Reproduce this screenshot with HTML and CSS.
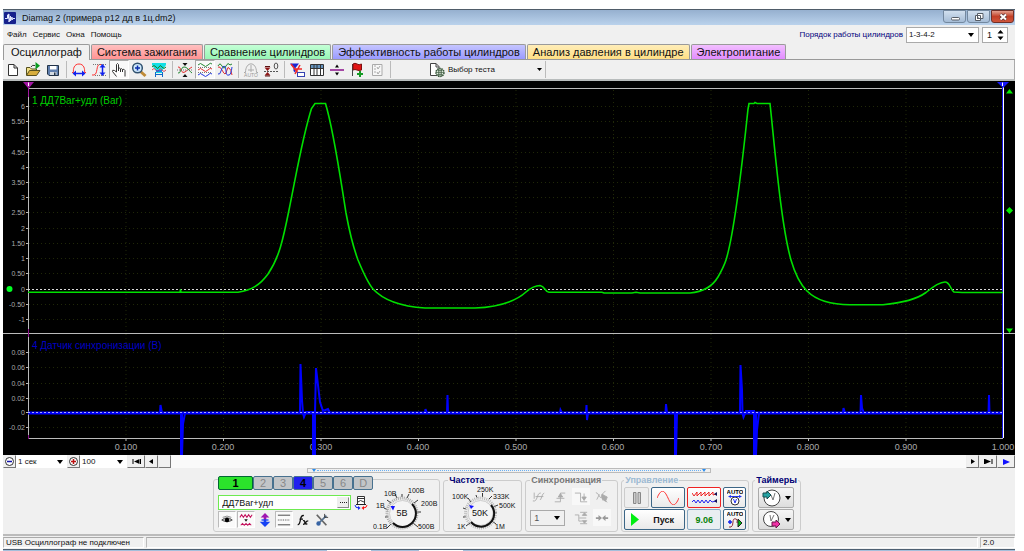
FILE: index.html
```html
<!DOCTYPE html>
<html lang="ru">
<head>
<meta charset="utf-8">
<title>Diamag 2</title>
<link rel="stylesheet" href="styles.css">
</head>
<body>
<div class="window">
  <header class="titlebar">
    <svg class="app-icon" viewBox="0 0 12 12"><rect width="12" height="12" rx="1" fill="#16218c"/><path d="M1 6.500H3.500V3L5 2V10L6.500 4V9L8 5V8L9 6.500H11" fill="#fff" stroke="#dfe6ff"/></svg>
    <h1 class="title">Diamag 2 (примера р12 дд в 1ц.dm2)</h1>
    <div class="window-buttons">
      <button class="win-btn" aria-label="Свернуть"><svg width="22" height="12" viewBox="0 0 22 12"><rect x="7.500" y="6.500" width="8" height="2.500" rx="1" fill="#fff" stroke="#565d66"/></svg></button>
      <button class="win-btn" aria-label="Развернуть"><svg width="22" height="12" viewBox="0 0 22 12"><path d="M9.500 2.500H15V7.500H9.500ZM7.500 4.500H12.500V9.500H7.500Z" fill="#fff" stroke="#565d66"/><path d="M9 6.500h2v1.500H9z" fill="#565d66"/></svg></button>
      <button class="win-btn win-close" aria-label="Закрыть"><svg width="22" height="12" viewBox="0 0 22 12"><path d="M8.500 3.500L14 8.500M14 3.500L8.500 8.500" stroke="#553338" stroke-width="3.500"/><path d="M8.500 3.500L14 8.500M14 3.500L8.500 8.500" stroke="#fff" stroke-width="2"/></svg></button>
    </div>
  </header>

  <div class="menubar">
    <nav class="menu"><button>Файл</button><button>Сервис</button><button>Окна</button><button>Помощь</button></nav>
    <div class="order">
      <label class="order-label" for="order">Порядок работы цилиндров</label>
      <select id="order" class="field order-select"><option>1-3-4-2</option></select>
      <span class="field spinner"><input id="cyl" type="number" value="1" aria-label="Номер цилиндра"><svg width="7" height="10" viewBox="0 0 7 10"><path d="M0.500 3.500L3.500 0L6.500 3.500ZM0.500 6.500H6.500L3.500 10Z"/></svg></span>
    </div>
  </div>

  <nav class="tabs" role="tablist">
    <button role="tab" class="tab active" aria-selected="true">Осциллограф</button>
    <button role="tab" class="tab red">Система зажигания</button>
    <button role="tab" class="tab green">Сравнение цилиндров</button>
    <button role="tab" class="tab blue">Эффективность работы цилиндров</button>
    <button role="tab" class="tab yellow">Анализ давления в цилиндре</button>
    <button role="tab" class="tab violet">Электропитание</button>
  </nav>

  <div class="toolbar">
    <button class="tool" aria-label="Новый"><svg viewBox="0 0 16 16"><path d="M3.500 2.500H9L12.500 6V13.500H3.500ZM9 2.500V6H12.500" fill="#fff" stroke="#333"/></svg></button>
    <button class="tool" aria-label="Открыть"><svg viewBox="0 0 16 16"><path d="M1.500 13V5.500H5L6.500 7H11.500V9" fill="#f2e28a" stroke="#57501f"/><path d="M1.500 13.500L4.500 8.500H15L11.500 13.500Z" fill="#d7ad3d" stroke="#57501f"/><path d="M6 5Q7 2.500 10 3.500" fill="none" stroke="#333"/><path d="M10.500 0L15 3.800L10.500 7.500Z" fill="#079b20"/></svg></button>
    <button class="tool" aria-label="Сохранить"><svg viewBox="0 0 16 16"><path d="M2.500 3.500H13.500V13.500H4L2.500 12Z" fill="#607fae" stroke="#233449"/><path d="M5 4H11.500V7.500H5Z" fill="#fff"/><path d="M5 10H11.500V13H5Z" fill="#d5dbe2"/><path d="M9 10.500h1.500V13H9z" fill="#233449"/></svg></button>
    <span class="sep"></span>
    <button class="tool" aria-label="Период"><svg viewBox="0 0 16 16"><path d="M1 10.500H2.500C2 7 3 2 8 2S14 7 13.500 10.500H15" fill="none" stroke="#f33"/><path d="M3 11.500H13" stroke="#12e" stroke-width="1.500"/><path d="M1.500 11.500L5 8.500V14.500ZM14.500 11.500L11 8.500V14.500Z" fill="#12e"/></svg></button>
    <button class="tool" aria-label="Амплитуда"><svg viewBox="0 0 16 16"><path d="M1 13H3C7 12 5 3 8.500 2.500H10" fill="none" stroke="#f33"/><path d="M2 2.500H15M4 13.500H15" stroke="#777" stroke-dasharray="1 1"/><path d="M11.500 4V12" stroke="#12e" stroke-width="1.500"/><path d="M11.500 2L14.500 5.500H8.500ZM11.500 14L8.500 10.500H14.500Z" fill="#12e"/></svg></button>
    <button class="tool pressed" aria-label="Рука"><svg viewBox="0 0 16 16"><path d="M5.500 14.500L1.500 9.500Q1 7.500 3.500 8.500L5.500 10V2.500Q6.500 .5 7.500 2.500V6.500Q8.500 5.500 9.500 7Q10.500 6 11.500 7.500Q13 6.500 14 8.500V14.500M7.500 6V9M9.500 7V10M11.500 7.500V10" fill="#fff" stroke="#333"/></svg></button>
    <button class="tool" aria-label="Лупа"><svg viewBox="0 0 16 16"><path d="M9 9L14.500 14" stroke="#bf8a36" stroke-width="3"/><circle cx="6.500" cy="6" r="4.800" fill="#cfe9fb" stroke="#31516f" stroke-width="1.500"/><path d="M4 6H9M6.500 3.500V8.500" stroke="#0a2dac" stroke-width="1.500"/></svg></button>
    <button class="tool" aria-label="Диапазон"><svg viewBox="0 0 16 16"><path d="M1 1H15V3L11 9V11H5V9L1 3Z" fill="#13dfe5"/><path d="M1 5Q3 2 5 5T8 5T11 5T15 5" fill="none" stroke="#187b28"/><path d="M1 8Q3 5 5 8T8 8T11 8T15 8" fill="none" stroke="#d05060"/><path d="M5 9H11" stroke="#2227dd"/><path d="M4.500 10V15M11.500 10V15M5 12.500H11" stroke="#1269c7"/></svg></button>
    <span class="sep"></span>
    <button class="tool" aria-label="Совместить"><svg viewBox="0 0 16 16"><path d="M1 5Q2.500 4 4 8T8 10T12 7T15 5" fill="none" stroke="#e32f2f"/><path d="M1 11Q2.500 12 4 8T8 5T12 8T15 11" fill="none" stroke="#238732"/><path d="M0 8H16" stroke="#777" stroke-dasharray="1 1"/><path d="M8 4L5.500 1H10.500ZM8 12L5.500 15H10.500Z" fill="#111"/></svg></button>
    <button class="tool pressed" aria-label="Каналы"><svg viewBox="0 0 16 16" fill="none"><path d="M1 3Q3.500 0 6 3T11 3T15 2" stroke="#238732"/><path d="M1 8Q3.500 5 6 8T11 8T15 7" stroke="#e32f2f"/><path d="M1 13Q3.500 10 6 13T11 13T15 12" stroke="#2439df"/><path d="M1 5.500H15M1 10.500H15" stroke="#777" stroke-dasharray="1 1"/></svg></button>
    <button class="tool" aria-label="Наложить"><svg viewBox="0 0 16 16" fill="none"><path d="M1 4Q3 0 5 4T9 4T13 3L15 2" stroke="#238732"/><path d="M1 5Q3 4 5 8T8 12Q9 12 10 8T12 6Q14 7 15 13" stroke="#e32f2f"/><path d="M1 12Q3 13 4 9T7 4Q9 4 9 9T12 13Q14 13 15 5" stroke="#2439df"/></svg></button>
    <span class="sep"></span>
    <button class="tool" aria-label="Авто"><svg viewBox="0 0 16 16" fill="none" stroke="#aaa"><path d="M1 10.500H2.500C2.500 -1 13.500 -1 13.500 10.500H15M8 3V10M5 8H11"/><text x="8" y="15" text-anchor="middle" font-size="5" fill="#999" stroke="none">AUTO</text></svg></button>
    <button class="tool" aria-label="Обнулить"><svg viewBox="0 0 16 16"><path d="M1 9.500H16" stroke="#555" stroke-dasharray="2 1"/><path d="M4.500 9L1.500 5.500H7.500ZM4.500 10L1.500 13.500H7.500Z" fill="#8f1717"/><path d="M2 4.500H7M2 14H7" stroke="#5b1111"/><ellipse cx="13" cy="4" rx="1.800" ry="3" fill="none" stroke="#555"/></svg></button>
    <span class="sep"></span>
    <button class="tool" aria-label="Фильтр"><svg viewBox="0 0 16 16"><path d="M1 1.500H10L6.500 6V11L4.500 9V6Z" fill="#1925d4"/><path d="M2 2L9 11M11 3L6 12M5 7L13 7" stroke="#ee2929" stroke-width="1.500"/><rect x="8.500" y="10.500" width="7" height="4" fill="#fff" stroke="#3542b2"/></svg></button>
    <button class="tool" aria-label="Таблица"><svg viewBox="0 0 16 16"><path d="M1.500 2.500H14.500V13.500H1.500Z" fill="#fff" stroke="#333"/><path d="M2 3H14V6H2Z" fill="#6392bd"/><path d="M1.500 6.500H14.500M5 3V13M8 3V13M11.500 3V13" stroke="#333"/></svg></button>
    <button class="tool" aria-label="Разделить"><svg viewBox="0 0 16 16"><path d="M1 8H15" stroke="#8b0f8b" stroke-width="1.500"/><path d="M8 2.500L10 5.500H6ZM8 13.500L6 10.500H10Z"/></svg></button>
    <button class="tool" aria-label="Маркер"><svg viewBox="0 0 16 16"><path d="M3.500 2V14" stroke="#444"/><path d="M4 2Q6 .5 8 2T12.500 2V8Q10 9 8 8T4 8Z" fill="#e11414" stroke="#7d1010"/><path d="M11 9V15M8 12H14" stroke="#159b25" stroke-width="2"/></svg></button>
    <button class="tool" aria-label="Отчёт"><svg viewBox="0 0 16 16"><path d="M3.500 2.500H13V13.500H3.500Z" fill="#f7f7f7" stroke="#aaa"/><path d="M5 4H7M5 7H7M5 10H7M8 5L9 7L11 4M8 10L9 12L11 9" stroke="#aaa" fill="none"/></svg></button>
    <span class="sep"></span>
    <button class="test-btn">
      <svg width="16" height="16" viewBox="0 0 16 16"><path d="M1.500 1.500H7L10 4.500V13.500H1.500ZM7 1.500V5H10" fill="#fff" stroke="#444"/><circle cx="11" cy="10.500" r="4" fill="#dceadb" stroke="#345236" stroke-dasharray="1.500 .7" stroke-width="1.500"/><path d="M7 10.500H15M11 6.500V14.500M8.500 8.500H13.500M8.500 12.500H13.500M9.500 7V14M12.500 7V14" stroke="#47634a" stroke-width=".7"/></svg>
      <span class="test-text">Выбор теста</span>
      <svg width="5" height="3" viewBox="0 0 5 3"><path d="M0 0H5L2.500 3Z"/></svg>
    </button>
    <span class="sep"></span>
  </div>

  <main class="scope">
    <svg class="chart" viewBox="3 81 1012 374" role="img" aria-label="Осциллограмма">
      <rect x="3" y="81" width="1012" height="374" fill="#000"/>
      <g class="grid">
        <path d="M126 90V438M223.500 90V438M321 90V438M418.500 90V438M516 90V438M613.500 90V438M711 90V438M808.500 90V438M906 90V438"/>
        <path d="M29 106.500H1003M29 121.500H1003M29 137.500H1003M29 152.500H1003M29 167.500H1003M29 182.500H1003M29 197.500H1003M29 212.500H1003M29 228.500H1003M29 243.500H1003M29 258.500H1003M29 273.500H1003M29 304.500H1003M29 319.500H1003M29 352.500H1003M29 367.500H1003M29 383.500H1003M29 398.500H1003M29 427.500H1003"/>
      </g>
      <path class="frame" d="M28 88.500H1003M28.500 84V438M3 333.500H1015M28 438.500H1003M126 438V441M223.500 438V441M321 438V441M418.500 438V441M516 438V441M613.500 438V441M711 438V441M808.500 438V441M906 438V441"/>
      <path class="frame" d="M26 106.500H28M26 121.500H28M26 137.500H28M26 152.500H28M26 167.500H28M26 182.500H28M26 197.500H28M26 212.500H28M26 228.500H28M26 243.500H28M26 258.500H28M26 273.500H28M26 289.500H28M26 304.500H28M26 319.500H28M26 352.500H28M26 367.500H28M26 383.500H28M26 398.500H28M26 412.500H28M26 427.500H28"/>
      <path d="M28.500 329V337M28.500 435V439" stroke="#8a118a"/>
      <g class="ylab">
        <text x="25" y="109">6</text><text x="25" y="124">5.50</text><text x="25" y="140">5</text><text x="25" y="155">4.50</text><text x="25" y="170">4</text><text x="25" y="185">3.50</text><text x="25" y="200">3</text><text x="25" y="215">2.50</text><text x="25" y="231">2</text><text x="25" y="246">1.50</text><text x="25" y="261">1</text><text x="25" y="276">0.50</text><text x="25" y="292">0</text><text x="25" y="307">-0.50</text><text x="25" y="322">-1</text>
        <text x="25" y="355">0.08</text><text x="25" y="370">0.06</text><text x="25" y="386">0.04</text><text x="25" y="401">0.02</text><text x="25" y="415">0</text><text x="25" y="430">-0.02</text>
      </g>
      <g class="xlab">
        <text x="126" y="450">0.100</text><text x="223" y="450">0.200</text><text x="321" y="450">0.300</text><text x="418" y="450">0.400</text><text x="516" y="450">0.500</text><text x="613" y="450">0.600</text><text x="711" y="450">0.700</text><text x="808" y="450">0.800</text><text x="906" y="450">0.900</text><text x="1003" y="450">1.000</text>
      </g>
      <path d="M23 82H34L29 88H28Z" fill="#a315a3"/><path d="M28.500 87V97" stroke="#a315a3"/><path d="M28.500 82.500V86" stroke="#fff"/>
      <path d="M1003.500 84V438" stroke="#fff"/><path d="M1002.500 84V438" stroke="#1515ee"/>
      <path d="M997 82H1009L1003 88Z" fill="#1717ff"/><path d="M1002.500 82.500V86" stroke="#fff"/>
      <path d="M1006 93.500L1009.500 89L1013 93.500ZM1006 328.500H1013L1009.500 333ZM1006 210.500L1009.500 207L1013 210.500L1009.500 214Z" fill="#00ef00"/>
      <circle cx="9.500" cy="289" r="3" fill="#00ff22"/>
      <text class="ch1" x="32" y="104">1 ДД7Bar+удл (Bar)</text>
      <text class="ch4" x="32" y="349">4 Датчик синхронизации (В)</text>
      <path class="zero" d="M28 289.500H1003"/>
      <path class="trace1" d="M28 292.300H180L180.500 289.500L181 292.300H238C252 290 260 285 268 274C279 258 283 240 289 210C297 171 302 139 311.500 108.500L315 103.500H325.500C334 132 340 176 346 213C351 240 355 252 358 260C363 272 368 283 373 289C384 301 402 306.500 425 308H475C497 307 515 302 526 292C533 286 537 285.500 540 285.500C545 286 545 292 549 292.300H602L604 293H632L636 292.300L640 293H690C703 292 712 287 718 277C722 270 724 266 726 260C735 231 743 157 748 109L749 103.500H754L755 102.500L757 103.500H770C775 150 781 225 791 260C795 274 801 285 807 291C819 303 837 304.700 850 304.700H883C902 303 917 299 926 292.500C935 285 940 282 945 282C950 282 950 289 954 292L962 292.500H1003"/>
      <path class="trace4" d="M28 413H160L160.500 405L162 413H181V455H182L183 424L185 413H300L300.500 364L302 400L303 413L304 417L306 412H313V455H315V413L316 368L318 385L320 402L323 411L328 409L330 413H425L425.500 409L427 413H447L447.500 395L448 413H560L560.500 410L562 413H586L586.500 405L587 420L588 413H665.500L666 404L667 413H675V455H676L677 413H740L740.500 365L742 390L742.500 413L743.500 417L746 411H754V455H756L757 430L759 413H843L843.500 408L845 413H860.500L861 395L862 408L864 413H988.500L989 395L989.500 413H1003"/>
      <path d="M181.500 413V455M314.500 413V455M675.500 413V455M755.500 413V455M28 413H1003" stroke="#00f" stroke-width="3"/>
      <path class="zero low" d="M28 412.500H1003"/>
    </svg>
  </main>

  <div class="scrollrow">
    <button class="sbtn" aria-label="Сжать"><svg width="11" height="11" viewBox="0 0 11 11"><circle cx="5.500" cy="5.500" r="4" fill="#fff" stroke="#333"/><path d="M3 5.500H8" stroke="#11a" stroke-width="1.500"/></svg></button>
    <select class="scale scale-time" aria-label="Развёртка"><option>1 сек</option></select>
    <button class="sbtn" aria-label="Растянуть"><svg width="11" height="11" viewBox="0 0 11 11"><circle cx="5.500" cy="5.500" r="4" fill="#fff" stroke="#333"/><path d="M3 5.500H8M5.500 3V8" stroke="#b11" stroke-width="1.500"/></svg></button>
    <select class="scale scale-zoom" aria-label="Масштаб"><option>100</option></select>
    <button class="sbtn wide" aria-label="В начало"><svg width="9" height="5" viewBox="0 0 9 5"><path d="M1 0V5M8.500 0V5" stroke="#000"/><path d="M7.500 0V5L2 2.500Z"/></svg></button>
    <button class="sbtn" aria-label="Назад"><svg width="5" height="5" viewBox="0 0 5 5"><path d="M4 0V5L0 2.500Z"/></svg></button>
    <span class="track"><button class="sbtn" aria-label="Ползунок"></button></span>
    <button class="sbtn" aria-label="Вперёд"><svg width="5" height="5" viewBox="0 0 5 5"><path d="M1 0V5L5 2.500Z"/></svg></button>
    <button class="sbtn wide" aria-label="В конец"><svg width="9" height="5" viewBox="0 0 9 5"><path d="M8 0V5M.500 0V5" stroke="#000"/><path d="M1 0V5L7 2.500Z"/></svg></button>
    <button class="sbtn wide" aria-label="Воспроизвести"><svg width="7" height="6" viewBox="0 0 7 6"><path d="M0 0V6L7 3Z" fill="#11f"/></svg></button>
  </div>

  <div class="splitter"><svg width="6" height="3" viewBox="0 0 6 3"><path d="M1 0H5L3 3Z" fill="#2a8df0"/></svg><span class="dots"></span><svg width="6" height="3" viewBox="0 0 6 3"><path d="M1 0H5L3 3Z" fill="#2a8df0"/></svg></div>

  <section class="panel">
    <fieldset class="group channels">
      <div class="channel-side">
        <div class="channel-buttons"><button class="ch on1">1</button><button class="ch">2</button><button class="ch">3</button><button class="ch on4">4</button><button class="ch">5</button><button class="ch">6</button><button class="ch">D</button></div>
        <div class="name-row">
          <span class="name-box"><input type="text" value="ДД7Bar+удл" aria-label="Название канала"><button class="more" aria-label="Выбрать"><svg width="7" height="1" viewBox="0 0 7 1"><path d="M0 .5H7" stroke="#222" stroke-dasharray="1 1"/></svg></button></span>
          <svg width="14" height="14" viewBox="0 0 14 14"><path d="M3.500 .5H10.500V8.500H3.500ZM3 2.500H11M4 6Q6 3 10 6" fill="#fff" stroke="#333"/><path d="M2 8.500H12" stroke="#222"/><path d="M5 12Q1 12 1 9" stroke="#12e" fill="none"/><path d="M4 10L6.500 12L4 14Z" fill="#12e"/><path d="M9 12Q13 12 13 9" stroke="#f11" fill="none"/><path d="M10 10L7.500 12L10 14Z" fill="#f11"/></svg>
        </div>
        <div class="mini-tools">
          <button class="mini down" aria-label="Показать"><svg viewBox="0 0 16 16"><path d="M2 8Q8 3 14 8Q8 12 2 8Z" fill="#bbb" stroke="#444"/><circle cx="8" cy="8" r="2.500"/><path d="M3 5Q8 2 13 5" fill="none" stroke="#888"/></svg></button>
          <button class="mini down" aria-label="Форма"><svg viewBox="0 0 16 16" fill="none"><path d="M1 5L3 2L5 5L7 2L9 5L11 2L13 5L15 2M2 14L4 12L6 14L8 12L10 14L12 12L14 14" stroke="#c4105c" stroke-width="1.200"/><path d="M6 7H10L8 10Z" fill="#111"/></svg></button>
          <button class="mini" aria-label="Сдвиг"><svg viewBox="0 0 16 16"><path d="M8 0L13 5H9.500V8H6.500V5H3Z" fill="#a017b0"/><path d="M8 16L14 10H9.500V8H6.500V10H2Z" fill="#1642f4"/><path d="M4 8H12" stroke="#1642f4" stroke-width="1.500"/></svg></button>
          <button class="mini down" aria-label="Линии"><svg viewBox="0 0 16 16"><path d="M1 2.500H15M1 13.500H15" stroke="#333"/><path d="M1 8H15" stroke="#333" stroke-dasharray="1 1"/></svg></button>
          <button class="mini" aria-label="Функция"><svg viewBox="0 0 16 16"><path d="M2 13Q4 14 5 8T9 3M4 7H8M8 9Q10 8 10 10.500T13 12.500M14 9Q12 9 11 11T8 13" fill="none" stroke="#111" stroke-width="1.500"/></svg></button>
          <button class="mini" aria-label="Настройка"><svg viewBox="0 0 16 16"><path d="M2 2L13 14" stroke="#666" stroke-width="2"/><path d="M13 3L4 12" stroke="#54708f" stroke-width="2"/><circle cx="4" cy="12" r="2.500" fill="#3864a4"/><path d="M11 1V5H15" fill="none" stroke="#333"/></svg></button>
        </div>
      </div>
      <svg class="knob" width="66" height="48" viewBox="372 484 66 48">
        <path d="M390 524L386 528M387 517H384M387 510L383 508M390 503L386 500M396 498L394 494M406 498L408 494M413 503L417 500M416 512H420M412 523L417 527M401 497V494" stroke="#333"/>
        <circle cx="401" cy="513" r="15" fill="none" stroke="#aaa" stroke-width="3" stroke-dasharray="1 1"/>
        <circle cx="401.500" cy="513.500" r="13" fill="#f4f4f4" stroke="#ccc"/><path d="M411 504A13 13 0 0 1 392 523" fill="none" stroke="#111" stroke-width="2"/>
        <path d="M389.500 506H394L392 510.500Z" fill="#11f"/><text class="knob-value" x="401" y="516">5В</text>
        <text x="383" y="496">10В</text><text x="407" y="493">100В</text><text x="420" y="506">200В</text><text x="375" y="508">1В</text><text x="372" y="529">0.1В</text><text x="417" y="529">500В</text>
      </svg>
    </fieldset>

    <fieldset class="group"><legend>Частота</legend>
      <svg class="knob rate" width="69" height="46" viewBox="446 484 69 46">
        <path d="M468 523L464 526M464 517H461M464 509L461 508M469 502L466 498M475 498L474 495M480.500 497V493M487 499L490 496M491 507L496 505M492 513H495M490 521L494 524" stroke="#333"/>
        <circle cx="478.500" cy="513" r="15" fill="none" stroke="#bbb" stroke-width="3" stroke-dasharray="1 1"/>
        <circle cx="478.500" cy="513" r="12.500" fill="#f4f4f4" stroke="#ccc"/><path d="M489 505A13 13 0 0 1 469 522" fill="none" stroke="#111" stroke-width="2"/>
        <path d="M467 505L472 506L469 509Z" fill="#11f"/><text class="knob-value" x="478" y="516">50K</text>
        <text x="450" y="499">100K</text><text x="475" y="492">250K</text><text x="491" y="499">333K</text><text x="497" y="508">500K</text><text x="455" y="529">1K</text><text x="493" y="529">1M</text>
      </svg>
    </fieldset>

    <fieldset class="group"><legend class="dim">Синхронизация</legend>
      <div class="sync">
        <button class="mini" aria-label="Синусоида"><svg viewBox="0 0 16 16" fill="none" stroke="#aaa"><path d="M1 12.500H3Q5 12 6 8T9 3.500H10M9 11Q10 12 11 8T14 3.500M4 7.500H13M2.500 3V10"/></svg></button>
        <button class="mini" aria-label="Фронт"><svg viewBox="0 0 16 16" fill="none" stroke="#aaa"><path d="M2 13.500H8.500V3.500H14M4 9.500H13"/><path d="M8.500 4L6 8H11Z" fill="#aaa"/></svg></button>
        <button class="mini light" aria-label="Спад"><svg viewBox="0 0 16 16" fill="none" stroke="#aaa"><path d="M1 3.500H7.500V13.500H15M11.500 4V10"/><path d="M11.500 12L9 8H14Z" fill="#aaa"/></svg></button>
        <button class="mini" aria-label="Любой"><svg viewBox="0 0 16 16" fill="none" stroke="#aaa"><path d="M1 3Q3 3 5 7T8 5L12 1M2 11L5 5M7 8L14 14M9 5V12"/><path d="M8 5L14 8L12 13L8 10Z" fill="#aaa"/></svg></button>
        <select class="sync-select" aria-label="Канал синхронизации" disabled><option>1</option></select>
        <button class="mini" aria-label="Порог"><svg viewBox="0 0 16 16" fill="none" stroke="#aaa"><path d="M1 4.500H5.500V11.500H9M7 1.500H15M7 14.500H15M6 8H14"/><path d="M12 2L9.500 5H14.500ZM12 14L9.500 11H14.500Z" fill="#aaa"/></svg></button>
        <button class="mini light" aria-label="Сжатие"><svg viewBox="0 0 16 16"><path d="M1 8H6M15 8H10" stroke="#999" stroke-width="2"/><path d="M8 8L4 4.500V11.500ZM8 8L12 4.500V11.500Z" fill="#999"/></svg></button>
      </div>
    </fieldset>

    <fieldset class="group tight"><legend class="pale">Управление</legend>
      <div class="control">
        <button class="ctl flat" aria-label="Пауза"><svg width="10" height="12" viewBox="0 0 10 12"><path d="M1.500 .5H4V11.500H1.500ZM6 .5H8.500V11.500H6Z" fill="#ccc" stroke="#888"/></svg></button>
        <button class="ctl" aria-label="Однократно"><svg width="22" height="14" viewBox="0 0 22 14"><path d="M0 7C4 -2 7 -2 11 7S18 16 22 7" fill="none" stroke="#f33"/></svg></button>
        <button class="ctl hot" aria-label="Непрерывно"><svg width="25" height="14" viewBox="0 0 25 14" fill="none"><path d="M0 2L2 5L5 1V5L9 1V5L13 1V5L17 1V5L21 1V4L24 3" stroke="#e22"/><path d="M0 11L2 9L4 12L6 9L8 12L10 9L12 12L14 9L16 12L18 9L20 11L24 10" stroke="#22e"/><path d="M25 1V5L22 3ZM25 8V12L22 10Z" fill="#115"/></svg></button>
        <button class="ctl" aria-label="Авто поиск"><svg width="16" height="17" viewBox="0 0 16 17"><text x="8" y="5" class="auto">AUTO</text><circle cx="8" cy="12" r="4" fill="#fff" stroke="#333"/><path d="M3 7.500H13M6.500 10L8 14L9.500 10" fill="none" stroke="#23e"/><path d="M1 7.500L4 6V9ZM15 7.500L12 6V9Z" fill="#23e"/></svg></button>
        <button class="ctl start"><svg width="8" height="13" viewBox="0 0 8 13"><path d="M0 0V13L8 6.500Z" fill="#0e1"/></svg><span>Пуск</span></button>
        <button class="ctl count">9.06</button>
        <button class="ctl" aria-label="Авто запуск"><svg width="16" height="17" viewBox="0 0 16 17"><text x="8" y="5" class="auto">AUTO</text><path d="M1 11H5M3 9V13" stroke="#12e" stroke-width="1.500"/><path d="M2 16H4Q6 15 6 11T9 8Q11 8 10 12" fill="none" stroke="#913039"/><path d="M11 8L15 12L11 16Z" fill="#0b1" stroke="#222"/></svg></button>
      </div>
    </fieldset>

    <fieldset class="group tight"><legend>Таймеры</legend>
      <div class="timers">
        <button class="timer" aria-label="Таймер пуска"><svg width="19" height="18" viewBox="0 0 19 18"><circle cx="10" cy="9" r="8" fill="#fff" stroke="#444"/><path d="M9 6L11 11L13 4" fill="none" stroke="#777"/><path d="M1 4H5V2L9 6L5 10V8H1Z" fill="#25a3a3" stroke="#174e50"/></svg><svg width="6" height="4" viewBox="0 0 6 4"><path d="M0 0H6L3 4Z"/></svg></button>
        <button class="timer" aria-label="Таймер остановки"><svg width="19" height="18" viewBox="0 0 19 18"><circle cx="9" cy="8" r="7.500" fill="#fff" stroke="#444"/><path d="M8 4L9 10L12 4" fill="none" stroke="#777"/><path d="M10 11H14V9L18 13L14 17V15H10Z" fill="#ef31a5" stroke="#6b154a"/></svg><svg width="6" height="4" viewBox="0 0 6 4"><path d="M0 0H6L3 4Z"/></svg></button>
      </div>
    </fieldset>
  </section>

  <footer class="status"><span class="cell state">USB Осциллограф не подключен</span><span class="cell fill"></span><span class="cell version">2.0</span></footer>
  <div class="taskbar"><span></span><span></span></div>
</div>
</body>
</html>
```
FILE: styles.css
```css
* { box-sizing: border-box; }
body { margin: 0; background: #fff; font-family: "Liberation Sans", Arial, sans-serif; font-size: 9px; color: #111; }
button, input, select { font: inherit; color: inherit; margin: 0; padding: 0; border: 0; background: none; border-radius: 0; }
svg { flex: none; }
select { appearance: none; background: #fff url("data:image/svg+xml,%3Csvg xmlns='http://www.w3.org/2000/svg' width='6' height='4'%3E%3Cpath d='M0 0H6L3 4Z'/%3E%3C/svg%3E") no-repeat right 4px center; }

.window { margin: 9px 9px 0 3px; background: #f0f0f0; }
.titlebar { display: flex; align-items: center; height: 16px; border-top: 1px solid #4f5c69; background: linear-gradient(#96b0cf, #bad2ec); }
.app-icon { width: 12px; height: 12px; margin: 0 6px 0 1px; }
.title { margin: 0; flex: 1; font-size: 9px; font-weight: normal; }
.window-buttons { display: flex; gap: 1px; align-self: flex-start; margin-right: 1px; }
.win-btn { width: 23px; height: 13px; display: grid; place-items: center; border: 1px solid #73889f; border-radius: 0 0 3px 3px; background: linear-gradient(#d1dfee, #a5bcd6); overflow: hidden; }
.win-close { border-color: #702f28; background: linear-gradient(#e3a08f, #c33f27 50%, #d0563c); }

.menubar { display: flex; align-items: center; justify-content: space-between; height: 19px; padding: 0 7px 0 4px; }
.menu { display: flex; gap: 6px; font-size: 8px; }
.order { display: flex; align-items: center; gap: 3px; }
.order-label { color: #00007c; font-size: 8px; }
.field { height: 16px; border: 1px solid #aaa; background-color: #fff; }
.order-select { width: 73px; padding-left: 2px; font-size: 8px; background-position: right 4px center; }
.spinner { display: flex; align-items: center; width: 26px; padding: 0 4px; }
.spinner input { width: 10px; appearance: textfield; outline: 0; }
.spinner input::-webkit-inner-spin-button { display: none; }

.tabs { display: flex; height: 16px; gap: 1px; font-size: 11px; border-bottom: 1px solid #999; }
.tab { height: 15px; padding: 0 5px; line-height: 15px; border: 1px solid #9a9a9a; border-bottom: 0; border-radius: 2px 2px 0 0; white-space: nowrap; }
.tab.active { height: 16px; padding: 0 7px; background: #f0f0f0; }
.tab.red { background: linear-gradient(#ffc0c0, #ff9393); }
.tab.green { background: linear-gradient(#c4ffd6, #98f5b5); }
.tab.blue { background: linear-gradient(#c5c5ff, #9a9aff); }
.tab.yellow { background: linear-gradient(#ffedb8, #ffdf85); }
.tab.violet { background: linear-gradient(#f2bfff, #e28cff); }

.toolbar { display: flex; align-items: center; height: 21px; border-right: 1px solid #aaa; border-bottom: 2px solid #b8bcbc; }
.tool { width: 20px; height: 19px; padding: 1px; border: 1px solid transparent; }
.tool svg { width: 16px; height: 16px; display: block; }
.pressed { border-color: #aaa #fff #fff #aaa; background: #f9f9f9; }
.sep { width: 6px; height: 17px; display: flex; justify-content: center; }
.sep::before { content: ""; width: 1px; background: #bbb; }
.test-btn { display: flex; align-items: center; gap: 3px; margin-left: 36px; font-size: 8px; width: 113px; }
.test-text { flex: 1; text-align: left; }

.chart { display: block; width: 100%; height: auto; }
.grid { stroke: #202808; stroke-dasharray: 1 3; }
.frame { stroke: #bbb; fill: none; }
.ylab { fill: #aaa; font-size: 7px; text-anchor: end; }
.xlab { fill: #aaa; font-size: 9px; text-anchor: middle; }
.ch1 { fill: #00cf00; font-size: 10px; }
.ch4 { fill: #0000c4; font-size: 10px; }
.zero { stroke: #d8d8d8; stroke-dasharray: 2 2; }
.low { stroke: #a9a9ff; }
.trace1 { stroke: #00df00; fill: none; stroke-width: 1.6; }
.trace4 { stroke: #0000ff; fill: none; stroke-width: 2; }

.scrollrow { display: flex; height: 13px; background: #fff; }
.sbtn { width: 13px; height: 13px; display: grid; place-items: center; background: #f0f0f0; border: 1px solid; border-color: #eee #777 #777 #eee; }
.sbtn.wide { width: 18px; }
.scale { font-size: 8px; padding-left: 2px; }
.scale-time { width: 51px; }
.scale-zoom { width: 47px; }
.track { flex: 1; background: #fafafa; }

.splitter { display: flex; align-items: center; width: 40%; height: 5px; margin: 0 auto; padding: 0 3px; border: 1px solid #bbb; }
.dots { flex: 1; border-top: 1px dotted #69b0f5; }

.panel { display: flex; justify-content: center; gap: 3px; padding: 1px 4px 2px 0; border-bottom: 2px solid #bbb; }
.group { min-width: 0; height: 58px; margin: 0; padding: 0 4px; border: 1px solid #ccc; border-radius: 3px; }
.group.tight { padding: 0 2px; }
.group legend { height: 12px; padding: 0 1px; font-size: 9px; line-height: 12px; font-weight: bold; color: #000074; }
.group legend.dim { color: #777; }
.group legend.pale { color: #9dbad3; }
.group.channels { display: flex; height: 53px; margin-top: 5px; padding: 0 0 0 4px; }
.channel-side { width: 155px; margin-top: -4px; }
.channel-buttons { display: flex; height: 14px; }
.ch { flex: 1; font-size: 11px; line-height: 12px; color: #888; background: #c2c5c8; border: 1px solid #47718f; border-radius: 2px; }
.on1 { flex: 0 0 35px; color: #000; font-weight: bold; background: #2be32b; border-color: #063; }
.on4 { color: #000; font-weight: bold; background: #2020ee; }
.name-row { display: flex; align-items: center; gap: 3px; margin-top: 5px; }
.name-box { display: flex; width: 133px; height: 15px; padding: 0 1px; border: 1px solid #6eea50; background: #fff; align-items: center; }
.name-box input { flex: 1; min-width: 0; padding-left: 2px; font-size: 9px; outline: 0; }
.more { width: 12px; height: 11px; display: grid; place-items: center; background: #eee; border: 1px solid; border-color: #eee #888 #888 #eee; }
.mini-tools { display: flex; gap: 1px; margin-top: 1px; }
.mini { width: 18px; height: 17px; padding: 1px; border: 1px solid transparent; }
.mini svg { display: block; width: 14px; height: 14px; }
.mini.down { background: #fafafa; border-color: #bbb #fff #fff #bbb; }
.mini.light { background: #f8f8f8; }
.knob { display: block; font-size: 7px; fill: #111; }
.channels .knob { margin-top: 4px; }
.rate { margin-top: -2px; }
.knob-value { font-size: 9px; text-anchor: middle; }
.sync { display: grid; grid-template-columns: repeat(4, 20px); gap: 4px 1px; align-items: center; padding-top: 2px; }
.sync-select { grid-column: span 2; height: 16px; width: 35px; padding-left: 3px; border: 1px solid #aaa; color: #555; background-color: #f0f0f0; opacity: 1; }
.control { display: grid; grid-template-columns: 25px 34px 34px 23px; gap: 1px 2px; padding-top: 1px; }
.ctl { height: 21px; display: flex; align-items: center; justify-content: center; background: linear-gradient(#fff, #e9e9e9); border: 1px solid #3c6686; border-radius: 2px; }
.flat { border-color: #ccc; background: #eee; }
.hot { border-color: #e22; }
.start { grid-column: span 2; gap: 14px; padding-right: 4px; font-size: 9px; font-weight: bold; }
.count { font-weight: bold; color: #0a830a; border-color: #89aac3; background: #e9eef2; }
.auto { font-size: 6px; font-weight: bold; text-anchor: middle; }
.timers { display: grid; gap: 1px; justify-content: center; padding-top: 1px; }
.timer { width: 36px; height: 21px; display: flex; align-items: center; justify-content: center; gap: 4px; border: 1px solid #aaa; border-radius: 2px; background: linear-gradient(#f6f6f6, #ddd); }

.status { display: flex; gap: 2px; height: 13px; padding: 1px 0; font-size: 8px; line-height: 10px; }
.cell { border: 1px solid; border-color: #aaa #fff #fff #bbb; padding: 0 2px; }
.state { width: 141px; white-space: nowrap; }
.fill { flex: 1; }
.version { width: 35px; }
.taskbar { display: flex; gap: 48px; height: 3px; padding-left: 32%; border-top: 1px solid #4e6072; background: #a5bfdb; }
.taskbar span { width: 44px; background: #fff; }
```
